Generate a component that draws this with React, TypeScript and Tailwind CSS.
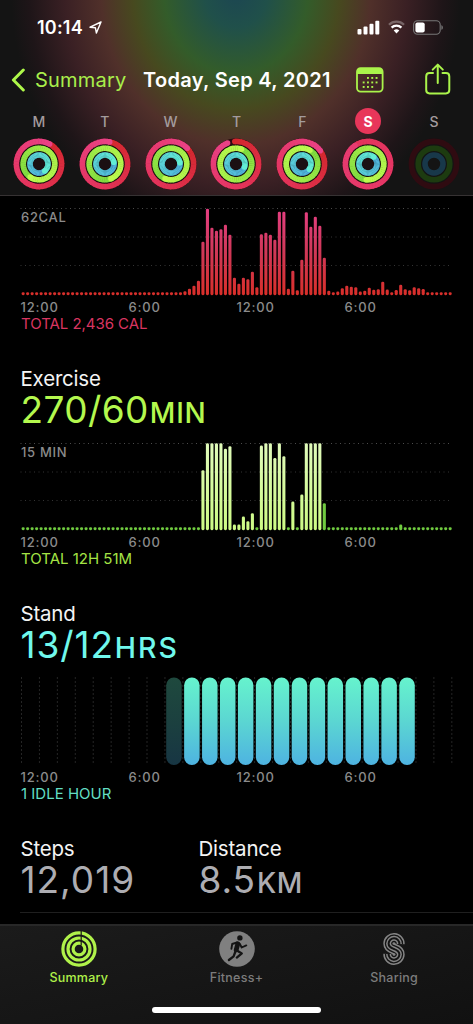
import { ReactNode } from "react";

type Ring = { head: number; sweep: number };

type Day = {
  label: string;
  rings: Ring[];
  active?: boolean;
  future?: boolean;
};

const days: Day[] = [
  { label: "M", rings: [{ head: 28, sweep: 360 }, { head: 214, sweep: 360 }, { head: 140, sweep: 360 }] },
  { label: "T", rings: [{ head: 12, sweep: 360 }, { head: 158, sweep: 360 }, { head: 78, sweep: 360 }] },
  { label: "W", rings: [{ head: 46, sweep: 360 }, { head: 202, sweep: 360 }, { head: 82, sweep: 360 }] },
  { label: "T", rings: [{ head: 338, sweep: 341 }, { head: 20, sweep: 360 }, { head: 110, sweep: 360 }] },
  { label: "F", rings: [{ head: 54, sweep: 360 }, { head: 30, sweep: 360 }, { head: 125, sweep: 360 }] },
  { label: "S", rings: [{ head: 325, sweep: 360 }, { head: 186, sweep: 360 }, { head: 40, sweep: 360 }], active: true },
  { label: "S", rings: [], future: true },
];

const ringStyles = [
  { r: 22.6, from: [212, 40, 46], to: [234, 66, 134], mid: [228, 52, 92], track: "#2f0b11" },
  { r: 15.8, from: [126, 218, 62], to: [188, 250, 78], mid: [164, 238, 74], track: "#1d3b10" },
  { r: 9, from: [78, 176, 222], to: [98, 238, 212], mid: [90, 208, 216], track: "#18384a" },
];

const move = [
  ...Array(36).fill(3),
  4, 6.5, 9.5, 14.5, 53.5, 86.5, 67.5, 64.5, 66, 70.5, 60.5, 17.5, 11.5, 17.5, 16, 23.5, 8, 61, 62.5, 60.5,
  55.5, 83.5, 83.5, 6.5, 24.5, 5, 35.5, 83, 68.5, 78.5, 69.5, 37.5, 4.5, 3, 3.7, 7, 9.5, 8.5, 8, 3.7,
  4.5, 7.5, 5.5, 6, 13.5, 5.7, 3, 5.3, 10.5, 6, 5, 8, 7, 6.3, 3, 3, 3, 3, 3, 3,
];

const exercise = [
  ...Array(40).fill(3),
  60, 87, 87, 87, 87, 81.5, 84, 5.7, 5.7, 13.7, 9, 17, 3, 84.7, 87, 87, 72.3, 87, 74, 3,
  28.7, 3, 35.7, 87, 87, 87, 87, 27, ...Array(16).fill(3), 5.7, ...Array(11).fill(3),
];

const polar = (r: number, deg: number) => {
  const a = ((deg - 90) * Math.PI) / 180;
  return [r * Math.cos(a), r * Math.sin(a)];
};

const rgb = (c: number[]) => `rgb(${c.join(",")})`;

const mix = (a: number[], b: number[], t: number) => rgb(a.map((v, i) => Math.round(v + (b[i] - v) * t)));

const ActivityRings = ({ day }: { day: Day }) => (
  <svg width="52" height="52" viewBox="-26 -26 52 52" fill="none">
    {!day.future && <circle r="25.4" fill="#1b1013" />}
    {ringStyles.map((style, i) => {
      if (day.future) return <circle key={i} r={style.r} stroke={style.track} strokeWidth="5.6" />;

      const { head, sweep } = day.rings[i];
      const steps = 48;
      const flat = day.active && i === 0;
      const [hx, hy] = polar(style.r, head);
      const [sx, sy] = polar(style.r, head - sweep);
      return (
        <g key={i}>
          <circle r={style.r} stroke={style.track} strokeWidth="5.6" />
          {sweep < 360 && <circle cx={sx} cy={sy} r="2.8" fill={rgb(style.from)} />}
          {Array.from({ length: steps }, (_, s) => {
            const a0 = head - sweep + (sweep * s) / steps;
            const a1 = a0 + sweep / steps + (s < steps - 1 ? 1.5 : 0);
            const [x0, y0] = polar(style.r, a0);
            const [x1, y1] = polar(style.r, a1);
            const t = s / (steps - 1);
            const color = t < 0.5 ? mix(style.from, style.mid, t * 2) : mix(style.mid, style.to, t * 2 - 1);
            return (
              <path
                key={s}
                d={`M${x0} ${y0}A${style.r} ${style.r} 0 0 1 ${x1} ${y1}`}
                stroke={flat ? mix(style.mid, style.to, t * 0.5) : color}
                strokeWidth="5.6"
              />
            );
          })}
          <circle cx={hx} cy={hy} r="2.8" fill={flat ? mix(style.mid, style.to, 0.5) : rgb(style.to)} />
        </g>
      );
    })}
  </svg>
);

const GridLines = ({ ys }: { ys: number[] }) => (
  <>
    {ys.map((y, i) => (
      <line
        key={y}
        x1="0.5"
        x2="432"
        y1={y}
        y2={y}
        stroke={i === 0 ? "#4c4c4c" : "#343434"}
        strokeWidth="1"
        strokeDasharray="1 3.5"
      />
    ))}
  </>
);

const BarChart = ({ data, kind }: { data: number[]; kind: "move" | "exercise" }) => (
  <svg className="block" width="434" height="90" viewBox="0 0 434 90">
    <defs>
      <linearGradient id="move" gradientUnits="userSpaceOnUse" x1="0" y1="0" x2="0" y2="88">
        <stop offset="0" stopColor="#e63f84" />
        <stop offset="0.5" stopColor="#cf3858" />
        <stop offset="1" stopColor="#d92f2a" />
      </linearGradient>
      <linearGradient id="exercise" gradientUnits="userSpaceOnUse" x1="0" y1="0" x2="0" y2="88">
        <stop offset="0" stopColor="#e0fabb" />
        <stop offset="1" stopColor="#cdfa84" />
      </linearGradient>
    </defs>
    <GridLines ys={[1.5, 30, 58.5]} />
    {data.map((h, i) => {
      let fill = "url(#move)";
      if (kind === "exercise") fill = h > 3 && i < 67 ? "url(#exercise)" : "#70cb40";
      return <rect key={i} x={1.6 + i * 4.495} y={88.2 - h} width="3.1" height={h} rx="1.4" fill={fill} />;
    })}
  </svg>
);

const StandChart = () => (
  <svg className="block" width="434" height="90" viewBox="0 0 434 90">
    <defs>
      <linearGradient id="stand" x1="0" y1="0" x2="0" y2="1">
        <stop offset="0" stopColor="#66f3cd" />
        <stop offset="0.5" stopColor="#5bd6d2" />
        <stop offset="1" stopColor="#4eb3e1" />
      </linearGradient>
    </defs>
    {Array.from({ length: 25 }, (_, i) => (
      <line
        key={i}
        x1={1.5 + i * 17.93}
        x2={1.5 + i * 17.93}
        y1="0.5"
        y2="87"
        stroke="#484848"
        strokeWidth="1"
        strokeDasharray="1 3"
      />
    ))}
    {Array.from({ length: 14 }, (_, i) => (
      <g key={i}>
        <rect x={146.2 + i * 17.93} y="0.6" width="15.5" height="87.4" rx="7.7" fill="#000" />
        <rect
          x={146.2 + i * 17.93}
          y="0.6"
          width="15.5"
          height="87.4"
          rx="7.7"
          fill="url(#stand)"
          opacity={i === 0 ? 0.3 : 1}
        />
      </g>
    ))}
  </svg>
);

const TimeAxis = () => (
  <div className="grid h-5 w-[432.5px] grid-cols-4 items-center pl-[0.5px] text-[13px] leading-5 font-medium tracking-[0.8px] text-[#8b8b8b]">
    <span>12:00</span>
    <span>6:00</span>
    <span>12:00</span>
    <span>6:00</span>
  </div>
);

type MetricProps = { title: string; value: string; valueStyle: string; unit?: string; unitStyle?: string; color: string };

const Metric = ({ title, value, valueStyle, unit, unitStyle, color }: MetricProps) => (
  <div className="pl-[0.5px]">
    <h2 className="h-[26px] text-[20.5px] leading-[26px] tracking-[-0.2px] text-[#f4f4f4]">{title}</h2>
    <div className={`flex h-9 items-baseline leading-9 ${color}`}>
      <span className={`text-[37px] leading-9 ${valueStyle}`}>{value}</span>
      {unit && <span className={`leading-9 font-medium ${unitStyle}`}>{unit}</span>}
    </div>
  </div>
);

const Total = ({ color, children }: { color: string; children: ReactNode }) => (
  <p className={`h-[15px] pl-px text-[15px] leading-[14px] whitespace-nowrap ${color}`}>{children}</p>
);

const StatusBar = () => (
  <div className="flex h-[54px] items-center justify-between pr-[30px] pl-[37px]">
    <div className="flex items-center gap-1.5 text-white">
      <span className="text-[18px] font-semibold tracking-[0.2px]">10:14</span>
      <svg width="13" height="13" viewBox="0 0 13 13" fill="none" stroke="#fff" strokeWidth="1.4" strokeLinejoin="round">
        <path d="M12 1 1 6.2 6.4 6.8 7.4 12Z" />
      </svg>
    </div>
    <div className="flex items-center gap-2">
      <svg width="23" height="15" viewBox="0 0 23 15" fill="#fff">
        <rect x="0.5" y="9" width="4" height="5.5" rx="1" />
        <rect x="6.5" y="6.5" width="4" height="8" rx="1" />
        <rect x="12.5" y="3.8" width="4" height="10.7" rx="1" />
        <rect x="18.3" y="0.8" width="4" height="13.7" rx="1" />
      </svg>
      <svg width="17" height="14" viewBox="0 0 17 14" fill="none" strokeWidth="2.3">
        <path d="M1 4.7a10.6 10.6 0 0 1 15 0" stroke="#fff" opacity="0.3" />
        <path d="M3.6 7.6a6.9 6.9 0 0 1 9.8 0" stroke="#fff" />
        <path d="M8.5 13.5 5.7 10.6a4 4 0 0 1 5.6 0Z" fill="#fff" />
      </svg>
      <svg width="30" height="15" viewBox="0 0 30 15">
        <rect x="0.6" y="0.7" width="26.6" height="13.6" rx="4" fill="none" stroke="#777" strokeWidth="1.1" />
        <rect x="2.4" y="2.5" width="9.3" height="10" rx="2" fill="#fff" />
        <path d="M28.4 5.2c2 .7 2 3.9 0 4.6Z" fill="#777" />
      </svg>
    </div>
  </div>
);

const NavBar = () => (
  <div className="flex h-[52px] items-center pl-[11px] text-[20px] leading-6">
    <svg width="15" height="24" viewBox="0 0 15 24" fill="none" stroke="#aef84a" strokeWidth="3" strokeLinecap="round" strokeLinejoin="round">
      <path d="M12.3 2 2.4 12 12.3 22" />
    </svg>
    <span className="ml-[9px] w-[108px] tracking-[0.2px] text-[#a9ee4b]">Summary</span>
    <h1 className="w-[213px] font-semibold tracking-[0.32px] whitespace-nowrap text-white">Today, Sep 4, 2021</h1>
    <svg width="28" height="26" viewBox="0 0 28 26" fill="none">
      <rect x="1" y="1.2" width="25.6" height="23.4" rx="3.6" stroke="#aaf44b" strokeWidth="1.8" />
      <path d="M1 7V4.5Q1 1.2 4.5 1.2H23Q26.6 1.2 26.6 4.5V7Z" fill="#aaf44b" />
      {[
        [11, 10], [15.3, 10], [19.6, 10],
        [6.7, 14.5], [11, 14.5], [15.3, 14.5], [19.6, 14.5],
        [6.7, 19], [11, 19], [15.3, 19],
      ].map(([x, y]) => (
        <rect key={`${x}-${y}`} x={x} y={y} width="1.9" height="1.9" fill="#aaf44b" />
      ))}
    </svg>
    <svg className="-mt-0.5 ml-[41px]" width="26" height="32" viewBox="0 0 26 32" fill="none" stroke="#aaf44b" strokeWidth="2" strokeLinecap="round" strokeLinejoin="round">
      <path d="M8 10H4.6Q1.2 10 1.2 13.4V27Q1.2 30.4 4.6 30.4H20.9Q24.3 30.4 24.3 27V13.4Q24.3 10 20.9 10H17.5" />
      <path d="M12.75 20V2M7.7 6.6 12.75 1.6 17.8 6.6" />
    </svg>
  </div>
);

const SummaryIcon = () => (
  <svg width="36" height="36" viewBox="-18 -18 36 36" fill="none" stroke="#b0f24a" strokeWidth="3.2">
    <circle r="16.1" />
    <circle r="11" />
    <circle r="5.9" />
    <path d="M2.2 -18V-3.5" stroke="#171717" strokeWidth="1.2" />
  </svg>
);

const FitnessIcon = () => (
  <svg width="36" height="36" viewBox="0 0 36 36" fill="none" stroke="#141414" strokeLinecap="round" strokeLinejoin="round">
    <circle cx="18" cy="18" r="17.8" fill="#808080" stroke="none" />
    <circle cx="20.9" cy="6.9" r="2.7" fill="#141414" stroke="none" />
    <path d="M18.8 12.8 17.2 18.8" strokeWidth="4.8" />
    <path d="M18 11.5 13.2 13 12.4 17.8M20.7 12.8 22.7 16.5 27.3 14.4" strokeWidth="1.9" />
    <path d="M17.5 19.3 22.8 22.4 17.8 26.6M16.6 20 14.6 25.3 9.9 29" strokeWidth="2.3" />
  </svg>
);

// one S curve, stroked four times to leave four thin parallel lines
const SharingIcon = () => {
  const d = "M5.4 -5A5.4 5.4 0 1 0 -5.4 -5.5C-5.4 -1.8 -2.8 -1 0 0C2.8 1 5.4 1.8 5.4 5.5A5.4 5.4 0 1 1 -5.4 5";
  return (
    <svg width="36" height="36" viewBox="-18 -18 36 36" fill="none">
      <path d={d} stroke="#858585" strokeWidth="10.6" />
      <path d={d} stroke="#141414" strokeWidth="7.6" />
      <path d={d} stroke="#858585" strokeWidth="5" />
      <path d={d} stroke="#141414" strokeWidth="2" />
    </svg>
  );
};

const TabItem = ({ label, active, children }: { label: string; active?: boolean; children: ReactNode }) => (
  <div className="flex flex-1 flex-col items-center pt-[5px]">
    {children}
    <span
      className={`mt-px text-[12.5px] leading-5 font-medium tracking-[0.25px] ${active ? "text-[#b0f24a]" : "text-[#7c7c7c]"}`}
    >
      {label}
    </span>
  </div>
);

export default function App() {
  return (
    <div className="flex h-[1024px] w-[473px] flex-col overflow-hidden bg-black font-['Inter',sans-serif]">
      <header className="h-[196px] shrink-0 border-b border-[#363233] bg-[#141414] bg-[radial-gradient(ellipse_225px_255px_at_236px_-8px,#1c4652_0%,#20504a_14%,#335c2a_32%,#47491f_46%,#50302a_60%,#3a2024_76%,#1e1518_92%,#141414_100%)]">
        <StatusBar />
        <NavBar />
        <div className="ml-[6px] grid w-[461px] grid-cols-7">
          {days.map((day, i) => (
            <div key={i} className="flex flex-col items-center pt-0.5">
              <span
                className={`flex size-[26px] items-center justify-center rounded-full text-[14px] ${day.active ? "bg-[#e8365a] font-bold text-white" : "font-medium text-[#a39b9d]"}`}
              >
                {day.label}
              </span>
              <div className="mt-1">
                <ActivityRings day={day} />
              </div>
            </div>
          ))}
        </div>
      </header>

      <main className="flex-1 overflow-hidden pt-[11px] pl-5">
        <section>
          <div className="relative">
            <BarChart data={move} kind="move" />
            <span className="absolute top-0 left-px text-[13px] leading-5 font-medium tracking-[0.7px] text-[#8b8b8b]">
              62CAL
            </span>
          </div>
          <TimeAxis />
          <Total color="text-[#d93560] tracking-[-0.05px]">TOTAL 2,436 CAL</Total>
        </section>

        <section className="mt-[34px]">
          <Metric
            title="Exercise"
            value="270/60"
            valueStyle="tracking-[0.4px]"
            unit="MIN"
            unitStyle="ml-px text-[28px] tracking-[0.8px]"
            color="text-[#b4f84e]"
          />
          <div className="relative mt-[14px]">
            <BarChart data={exercise} kind="exercise" />
            <span className="absolute top-0 left-px text-[13px] leading-5 font-medium tracking-[0.7px] text-[#8b8b8b]">
              15 MIN
            </span>
          </div>
          <TimeAxis />
          <Total color="text-[#a5e445]">TOTAL 12H 51M</Total>
        </section>

        <section className="mt-[34px]">
          <Metric
            title="Stand"
            value="13/12"
            valueStyle="tracking-[0.9px]"
            unit="HRS"
            unitStyle="ml-px text-[28.5px] tracking-[2px]"
            color="text-[#70f8ec]"
          />
          <div className="mt-[14px]">
            <StandChart />
          </div>
          <TimeAxis />
          <Total color="text-[#62dfc4]">1 IDLE HOUR</Total>
        </section>

        <section className="mt-[34px] flex h-[77px] border-b border-[#1f1f1f]">
          <div className="w-[178px]">
            <Metric title="Steps" value="12,019" valueStyle="tracking-[1px]" color="text-[#adadb2]" />
          </div>
          <Metric
            title="Distance"
            value="8.5"
            valueStyle="tracking-[0.9px]"
            unit="KM"
            unitStyle="ml-px text-[28px] tracking-[0.6px]"
            color="text-[#adadb2]"
          />
        </section>
      </main>

      <footer className="flex h-[100px] shrink-0 flex-col items-center border-t-2 border-[#282828] bg-gradient-to-br from-[#1b1b1b] to-[#111111]">
        <nav className="flex h-[81px] w-full">
          <TabItem label="Summary" active>
            <SummaryIcon />
          </TabItem>
          <TabItem label="Fitness+">
            <FitnessIcon />
          </TabItem>
          <TabItem label="Sharing">
            <SharingIcon />
          </TabItem>
        </nav>
        <div className="h-[6px] w-[169px] rounded-full bg-white" />
      </footer>
    </div>
  );
}
